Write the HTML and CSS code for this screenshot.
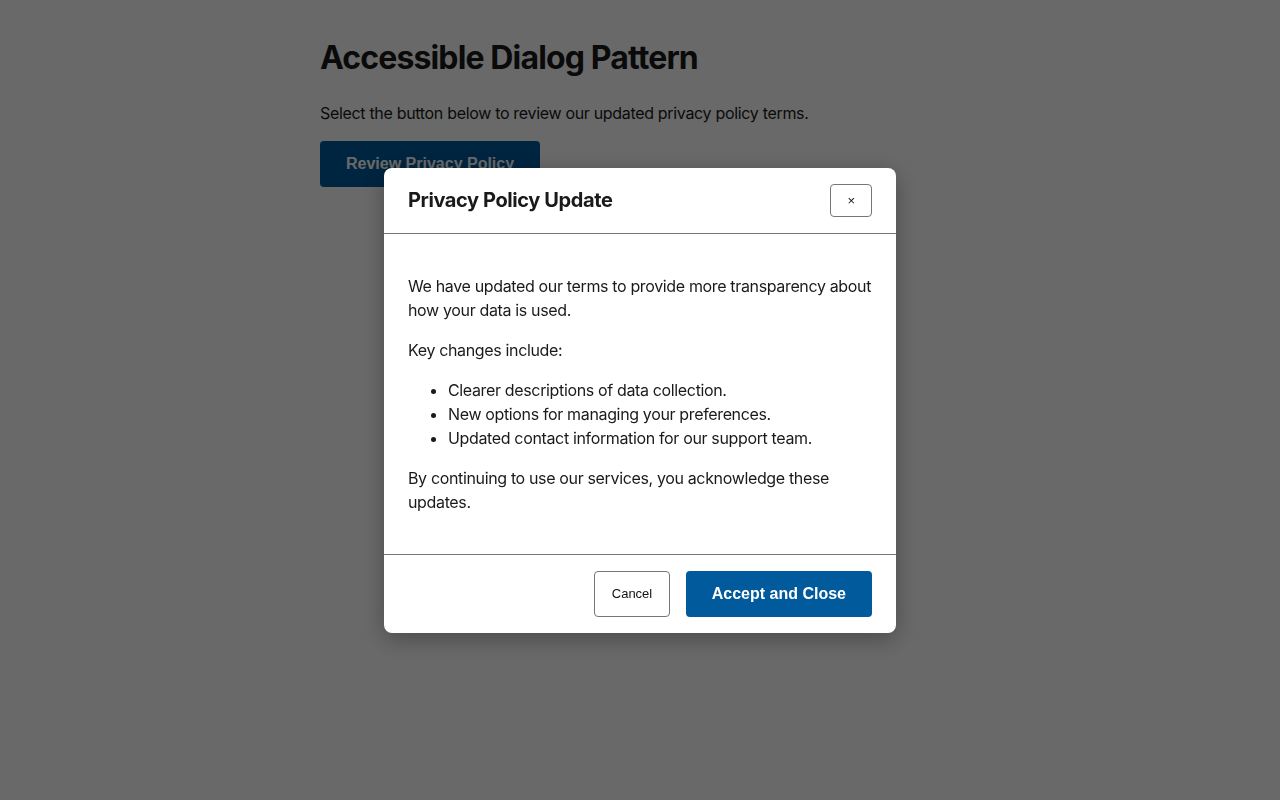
FILE: index.html
```html
<!DOCTYPE html>
<html lang="en">
<head>
<meta charset="utf-8">
<title>Accessible Dialog Pattern</title>
<link rel="stylesheet" href="styles.css">
</head>
<body>
<main class="page">
  <h1 class="page-title">Accessible Dialog Pattern</h1>
  <p class="page-text">Select the button below to review our updated privacy policy terms.</p>
  <button class="btn-primary btn-open" type="button">Review Privacy Policy</button>
</main>

<div class="overlay">
  <div class="dialog" role="dialog" aria-modal="true" aria-labelledby="dlg-title">
    <header class="dialog-header">
      <h2 class="dialog-title" id="dlg-title">Privacy Policy Update</h2>
      <button class="btn-close" type="button" aria-label="Close">×</button>
    </header>
    <div class="dialog-body">
      <p>We have updated our terms to provide more transparency about how your data is used.</p>
      <p>Key changes include:</p>
      <ul>
        <li>Clearer descriptions of data collection.</li>
        <li>New options for managing your preferences.</li>
        <li>Updated contact information for our support team.</li>
      </ul>
      <p>By continuing to use our services, you acknowledge these updates.</p>
    </div>
    <footer class="dialog-footer">
      <button class="btn-secondary" type="button">Cancel</button>
      <button class="btn-primary" type="button">Accept and Close</button>
    </footer>
  </div>
</div>
</body>
</html>
```

FILE: styles.css
```css
html, body {
  margin: 0;
  padding: 0;
}

body {
  font-family: Inter, "Noto Sans", sans-serif;
  font-size: 16px;
  line-height: 24px;
  letter-spacing: -0.02em;
  color: #1a1a1a;
  background: #ffffff;
}

.page {
  max-width: 640px;
  margin: 0 auto;
  padding-top: 39px;
}

.page-title {
  font-size: 32px;
  line-height: 38px;
  font-weight: 700;
  letter-spacing: -0.027em;
  margin: 0 0 24px;
}

.page-text {
  margin: 0 0 16px;
}

.btn-primary {
  font-family: "Liberation Sans", Arial, sans-serif;
  font-size: 16px;
  font-weight: 700;
  line-height: 18px;
  letter-spacing: 0;
  color: #ffffff;
  background: #005a9c;
  border: none;
  border-radius: 4px;
  padding: 14px 26px;
  cursor: pointer;
}

.btn-open {
  padding: 14px 26px;
}

.btn-secondary {
  font-family: "Liberation Sans", Arial, sans-serif;
  font-size: 13px;
  letter-spacing: 0;
  color: #111111;
  background: #ffffff;
  border: 1px solid #767676;
  border-radius: 4px;
  padding: 0 16.5px;
  cursor: pointer;
}

.overlay {
  position: fixed;
  inset: 0;
  background: rgba(0, 0, 0, 0.59);
  display: flex;
  align-items: center;
  justify-content: center;
}

.dialog {
  width: 512px;
  background: #ffffff;
  border-radius: 8px;
  box-shadow: 0 6px 24px rgba(0, 0, 0, 0.3);
}

.dialog-header {
  display: flex;
  align-items: center;
  justify-content: space-between;
  padding: 16px 24px;
  border-bottom: 1px solid #767676;
}

.dialog-title {
  margin: 0;
  font-size: 20px;
  line-height: 30px;
  font-weight: 700;
  letter-spacing: -0.02em;
}

.btn-close {
  font-family: "Liberation Sans", Arial, sans-serif;
  font-size: 13px;
  line-height: 15px;
  letter-spacing: 0;
  color: #111111;
  background: #ffffff;
  border: 1px solid #767676;
  border-radius: 4px;
  padding: 8px 16px;
  cursor: pointer;
}

.dialog-body {
  padding: 24px;
  letter-spacing: -0.022em;
}

.dialog-body p {
  margin: 16px 0;
}

.dialog-body ul {
  margin: 16px 0;
  padding-left: 40px;
}

.dialog-footer {
  display: flex;
  justify-content: flex-end;
  gap: 16px;
  padding: 16px 24px;
  border-top: 1px solid #767676;
}
```
